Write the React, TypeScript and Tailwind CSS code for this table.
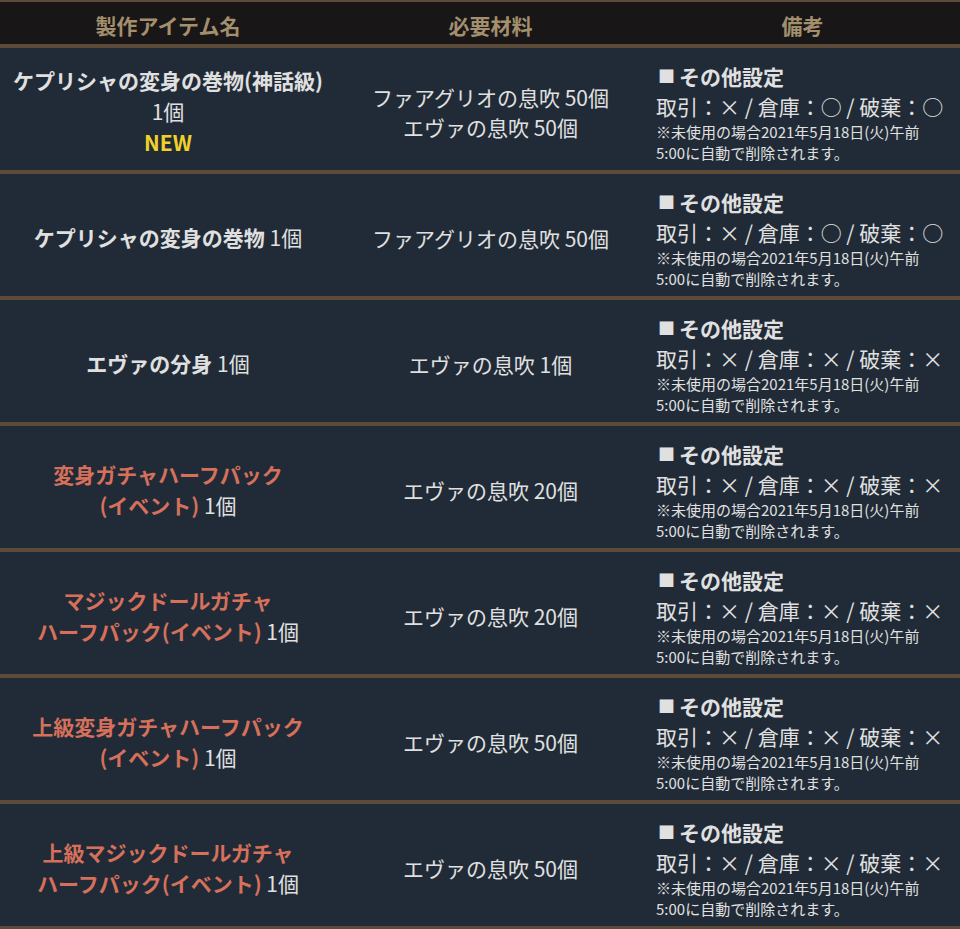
import React from 'react';

interface Row {
  name: React.ReactNode;
  materials: string[];
  trade: string;
}

const O = '○';
const X = '×';

const rows: Row[] = [
  {
    name: (
      <>
        <div className="font-bold">ケプリシャの変身の巻物(神話級)</div>
        <div>1個</div>
        <div className="font-bold text-[#f0d12a]">NEW</div>
      </>
    ),
    materials: ['ファアグリオの息吹 50個', 'エヴァの息吹 50個'],
    trade: `取引：${X} / 倉庫：${O} / 破棄：${O}`,
  },
  {
    name: (
      <div>
        <span className="font-bold">ケプリシャの変身の巻物</span> 1個
      </div>
    ),
    materials: ['ファアグリオの息吹 50個'],
    trade: `取引：${X} / 倉庫：${O} / 破棄：${O}`,
  },
  {
    name: (
      <div>
        <span className="font-bold">エヴァの分身</span> 1個
      </div>
    ),
    materials: ['エヴァの息吹 1個'],
    trade: `取引：${X} / 倉庫：${X} / 破棄：${X}`,
  },
  {
    name: (
      <>
        <div className="font-bold text-[#d6705b]">変身ガチャハーフパック</div>
        <div>
          <span className="font-bold text-[#d6705b]">(イベント)</span> 1個
        </div>
      </>
    ),
    materials: ['エヴァの息吹 20個'],
    trade: `取引：${X} / 倉庫：${X} / 破棄：${X}`,
  },
  {
    name: (
      <>
        <div className="font-bold text-[#d6705b]">マジックドールガチャ</div>
        <div>
          <span className="font-bold text-[#d6705b]">ハーフパック(イベント)</span> 1個
        </div>
      </>
    ),
    materials: ['エヴァの息吹 20個'],
    trade: `取引：${X} / 倉庫：${X} / 破棄：${X}`,
  },
  {
    name: (
      <>
        <div className="font-bold text-[#d6705b]">上級変身ガチャハーフパック</div>
        <div>
          <span className="font-bold text-[#d6705b]">(イベント)</span> 1個
        </div>
      </>
    ),
    materials: ['エヴァの息吹 50個'],
    trade: `取引：${X} / 倉庫：${X} / 破棄：${X}`,
  },
  {
    name: (
      <>
        <div className="font-bold text-[#d6705b]">上級マジックドールガチャ</div>
        <div>
          <span className="font-bold text-[#d6705b]">ハーフパック(イベント)</span> 1個
        </div>
      </>
    ),
    materials: ['エヴァの息吹 50個'],
    trade: `取引：${X} / 倉庫：${X} / 破棄：${X}`,
  },
];

const App: React.FC = () => {
  return (
    <div className="w-[960px] h-[929px] overflow-hidden bg-[#202b37] text-[#e0e0e0] font-['Noto_Sans_CJK_JP',sans-serif] text-[21px]">
      {/* header */}
      <div className="grid grid-cols-[336px_309px_315px] h-[48px] bg-[#181616] border-t-2 border-b-4 border-[#5d4b39] text-[#a38f6d] font-bold">
        <div className="flex items-center justify-center pt-[6px]">製作アイテム名</div>
        <div className="flex items-center justify-center pt-[6px]">必要材料</div>
        <div className="flex items-center justify-center pt-[6px]">備考</div>
      </div>

      {rows.map((row, i) => (
        <div
          key={i}
          className="grid grid-cols-[336px_309px_315px] h-[126px] border-b-4 border-[#5d4b39]"
        >
          <div className="flex flex-col items-center justify-center pt-[5px] text-center leading-[31px]">
            {row.name}
          </div>
          <div className="flex flex-col items-center justify-center pt-[5px] text-center leading-[30px]">
            {row.materials.map((m) => (
              <div key={m}>{m}</div>
            ))}
          </div>
          <div className="flex flex-col justify-center pt-[5px] pl-[11px]">
            <div className="flex items-center font-bold leading-[30px]">
              <span className="text-[17px] mr-[4px] ml-[2px]">■</span>
              その他設定
            </div>
            <div className="leading-[30px] whitespace-nowrap">{row.trade}</div>
            <div className="text-[15px] leading-[21px]">
              ※未使用の場合2021年5月18日(火)午前
              <br />
              5:00に自動で削除されます。
            </div>
          </div>
        </div>
      ))}
    </div>
  );
};

export default App;
